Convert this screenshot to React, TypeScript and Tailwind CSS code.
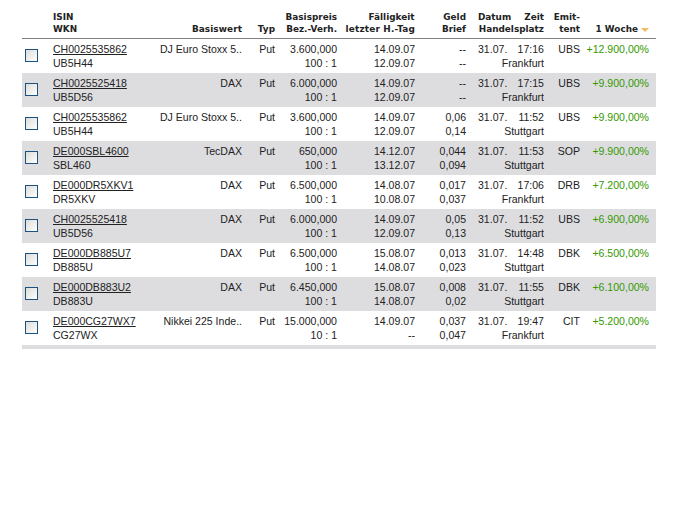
const rows = [
  ["CH0025535862","UB5H44","DJ Euro Stoxx 5..","3.600,000","100 : 1","14.09.07","12.09.07","--","--","31.07.","17:16","Frankfurt","UBS","+12.900,00%"],
  ["CH0025525418","UB5D56","DAX","6.000,000","100 : 1","14.09.07","12.09.07","--","--","31.07.","17:15","Frankfurt","UBS","+9.900,00%"],
  ["CH0025535862","UB5H44","DJ Euro Stoxx 5..","3.600,000","100 : 1","14.09.07","12.09.07","0,06","0,14","31.07.","11:52","Stuttgart","UBS","+9.900,00%"],
  ["DE000SBL4600","SBL460","TecDAX","650,000","100 : 1","14.12.07","13.12.07","0,044","0,094","31.07.","11:53","Stuttgart","SOP","+9.900,00%"],
  ["DE000DR5XKV1","DR5XKV","DAX","6.500,000","100 : 1","14.08.07","10.08.07","0,017","0,037","31.07.","17:06","Frankfurt","DRB","+7.200,00%"],
  ["CH0025525418","UB5D56","DAX","6.000,000","100 : 1","14.09.07","12.09.07","0,05","0,13","31.07.","11:52","Stuttgart","UBS","+6.900,00%"],
  ["DE000DB885U7","DB885U","DAX","6.500,000","100 : 1","15.08.07","14.08.07","0,013","0,023","31.07.","14:48","Stuttgart","DBK","+6.500,00%"],
  ["DE000DB883U2","DB883U","DAX","6.450,000","100 : 1","15.08.07","14.08.07","0,008","0,02","31.07.","11:55","Stuttgart","DBK","+6.100,00%"],
  ["DE000CG27WX7","CG27WX","Nikkei 225 Inde..","15.000,000","10 : 1","14.09.07","--","0,037","0,047","31.07.","19:47","Frankfurt","CIT","+5.200,00%"],
];

const grid = "grid grid-cols-[31px_97px_92px_33px_62px_78px_51px_78px_36px_76px]";

export default function App() {
  return (
    <div className="min-h-[531px] bg-white text-[#222222] font-['Liberation_Sans',Arial,sans-serif] text-[10.55px] leading-[14px]">
      <div className="ml-[22px] pt-[11px] w-[634px]">
        <div className={`${grid} h-[28px] border-b border-[#808080] font-['DejaVu_Sans',Verdana,sans-serif] font-bold text-[8.9px] leading-[12px]`}>
          <div />
          <div>ISIN<br />WKN</div>
          <div className="pt-[12px] text-right tracking-[0.1px]">Basiswert</div>
          <div className="pt-[12px] text-right">Typ</div>
          <div className="text-right">Basispreis<br />Bez.-Verh.</div>
          <div className="text-right whitespace-nowrap"><span className="pr-[0.5px]">Fälligkeit</span><br /><span className="tracking-[0.2px]">letzter H.-Tag</span></div>
          <div className="text-right">Geld<br />Brief</div>
          <div className="pl-[12px]">
            <div className="flex justify-between"><span>Datum</span><span>Zeit</span></div>
            <div className="text-right whitespace-nowrap">Handelsplatz</div>
          </div>
          <div className="text-right">Emit-<br />tent</div>
          <div className="pt-[12px] flex items-start justify-end pr-[7px] gap-[3px]">
            <span>1 Woche</span>
            <svg width="8" height="4" viewBox="0 0 8 4" className="mt-[5px]"><path d="M0 0h8L4 4z" fill="#f4b860" /></svg>
          </div>
        </div>
        {rows.map((r, i) => (
          <div key={i} className={`${grid} h-[34px] pt-[3px] ${i % 2 === 1 ? "bg-[#dddde0]" : "bg-white"}`}>
            <div className="pt-[7px] pl-[3px]">
              <div className="w-[13px] h-[13px] border border-[#1c5180] bg-gradient-to-br from-[#dcdcd7] to-white" />
            </div>
            <div><span className="underline">{r[0]}</span><br />{r[1]}</div>
            <div className="text-right whitespace-nowrap">{r[2]}</div>
            <div className="text-right">Put</div>
            <div className="text-right">{r[3]}<br />{r[4]}</div>
            <div className="text-right">{r[5]}<br />{r[6]}</div>
            <div className="text-right">{r[7]}<br />{r[8]}</div>
            <div className="pl-[12px]">
              <div className="flex justify-between"><span>{r[9]}</span><span>{r[10]}</span></div>
              <div className="text-right">{r[11]}</div>
            </div>
            <div className="text-right">{r[12]}</div>
            <div className="text-right pr-[7px] text-[#339900] whitespace-nowrap">{r[13]}</div>
          </div>
        ))}
        <div className="h-[4px] bg-[#dddde0]" />
      </div>
    </div>
  );
}
